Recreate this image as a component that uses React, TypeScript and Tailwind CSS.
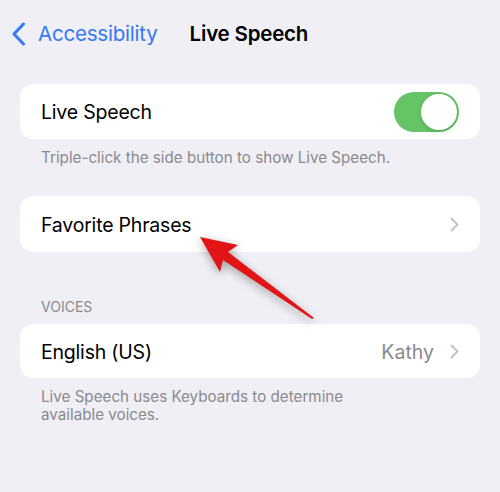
import React from 'react';

const font = { fontFamily: 'Inter, "Liberation Sans", sans-serif' };

const Chevron = () => (
  <svg width="9" height="15" viewBox="0 0 9 15" className="shrink-0">
    <path d="M1.5 1.5 L7.5 7.5 L1.5 13.5" fill="none" stroke="#c4c4c7" strokeWidth="2" strokeLinecap="round" strokeLinejoin="round" />
  </svg>
);

const Toggle = () => (
  <div className="flex h-[40px] w-[65px] items-center justify-end rounded-full bg-[#65c466] px-[2px]">
    <div className="h-[36px] w-[36px] rounded-full bg-white shadow-[0_2px_4px_rgba(0,0,0,0.15)]" />
  </div>
);

export default function App() {
  return (
    <div className="relative h-[492px] w-[500px] overflow-hidden bg-[#f0eff5] text-black" style={font}>
      <div className="relative flex h-[66px] items-center pt-[2px]">
        <div className="flex items-center pl-[12px] text-[#3478f6]">
          <svg width="14" height="24" viewBox="0 0 14 24">
            <path d="M11.5 2 L2 12 L11.5 22" fill="none" stroke="#3478f6" strokeWidth="3" strokeLinecap="round" strokeLinejoin="round" />
          </svg>
          <span className="ml-[12px] text-[20.5px] tracking-[-0.2px]">Accessibility</span>
        </div>
        <span className="ml-[32px] text-[20.5px] font-semibold tracking-[-0.2px]">Live Speech</span>
      </div>

      <div className="mx-[20px] mt-[18px] flex h-[55px] items-center justify-between rounded-[13px] bg-white pl-[21px] pr-[21px]">
        <span className="pt-[3px] text-[19.5px] tracking-[-0.2px]">Live Speech</span>
        <Toggle />
      </div>
      <p className="mt-[10px] pl-[41px] text-[15.2px] leading-[18px] text-[#8a8a8e]">
        Triple-click the side button to show Live Speech.
      </p>

      <div className="mx-[20px] mt-[29px] flex h-[56px] items-center justify-between rounded-[13px] bg-white pl-[21px] pr-[21px]">
        <span className="pt-[4px] text-[19.5px] tracking-[-0.2px]">Favorite Phrases</span>
        <Chevron />
      </div>

      <p className="mt-[46px] pl-[41px] text-[14px] leading-[18px] text-[#8a8a8e]">VOICES</p>
      <div className="mx-[20px] mt-[8px] flex h-[54px] items-center justify-between rounded-[13px] bg-white pl-[21px] pr-[21px]">
        <span className="pt-[3px] text-[19.5px] tracking-[-0.2px]">English (US)</span>
        <div className="flex items-center gap-[16px]">
          <span className="pt-[3px] text-[19.5px] text-[#8a8a8e]">Kathy</span>
          <Chevron />
        </div>
      </div>
      <p className="mt-[10px] w-[400px] pl-[41px] text-[15.2px] leading-[18px] text-[#8a8a8e]">
        Live Speech uses Keyboards to determine available voices.
      </p>

      <svg
        className="pointer-events-none absolute left-0 top-0"
        width="500"
        height="492"
        viewBox="0 0 500 492"
        style={{ filter: 'drop-shadow(0 3px 5px rgba(0,0,0,0.35))' }}
      >
        <path d="M200 237 L238 245 L228 252 L314 318 L312 319 L223 260 L220 272 Z" fill="#e11515" />
      </svg>
    </div>
  );
}
